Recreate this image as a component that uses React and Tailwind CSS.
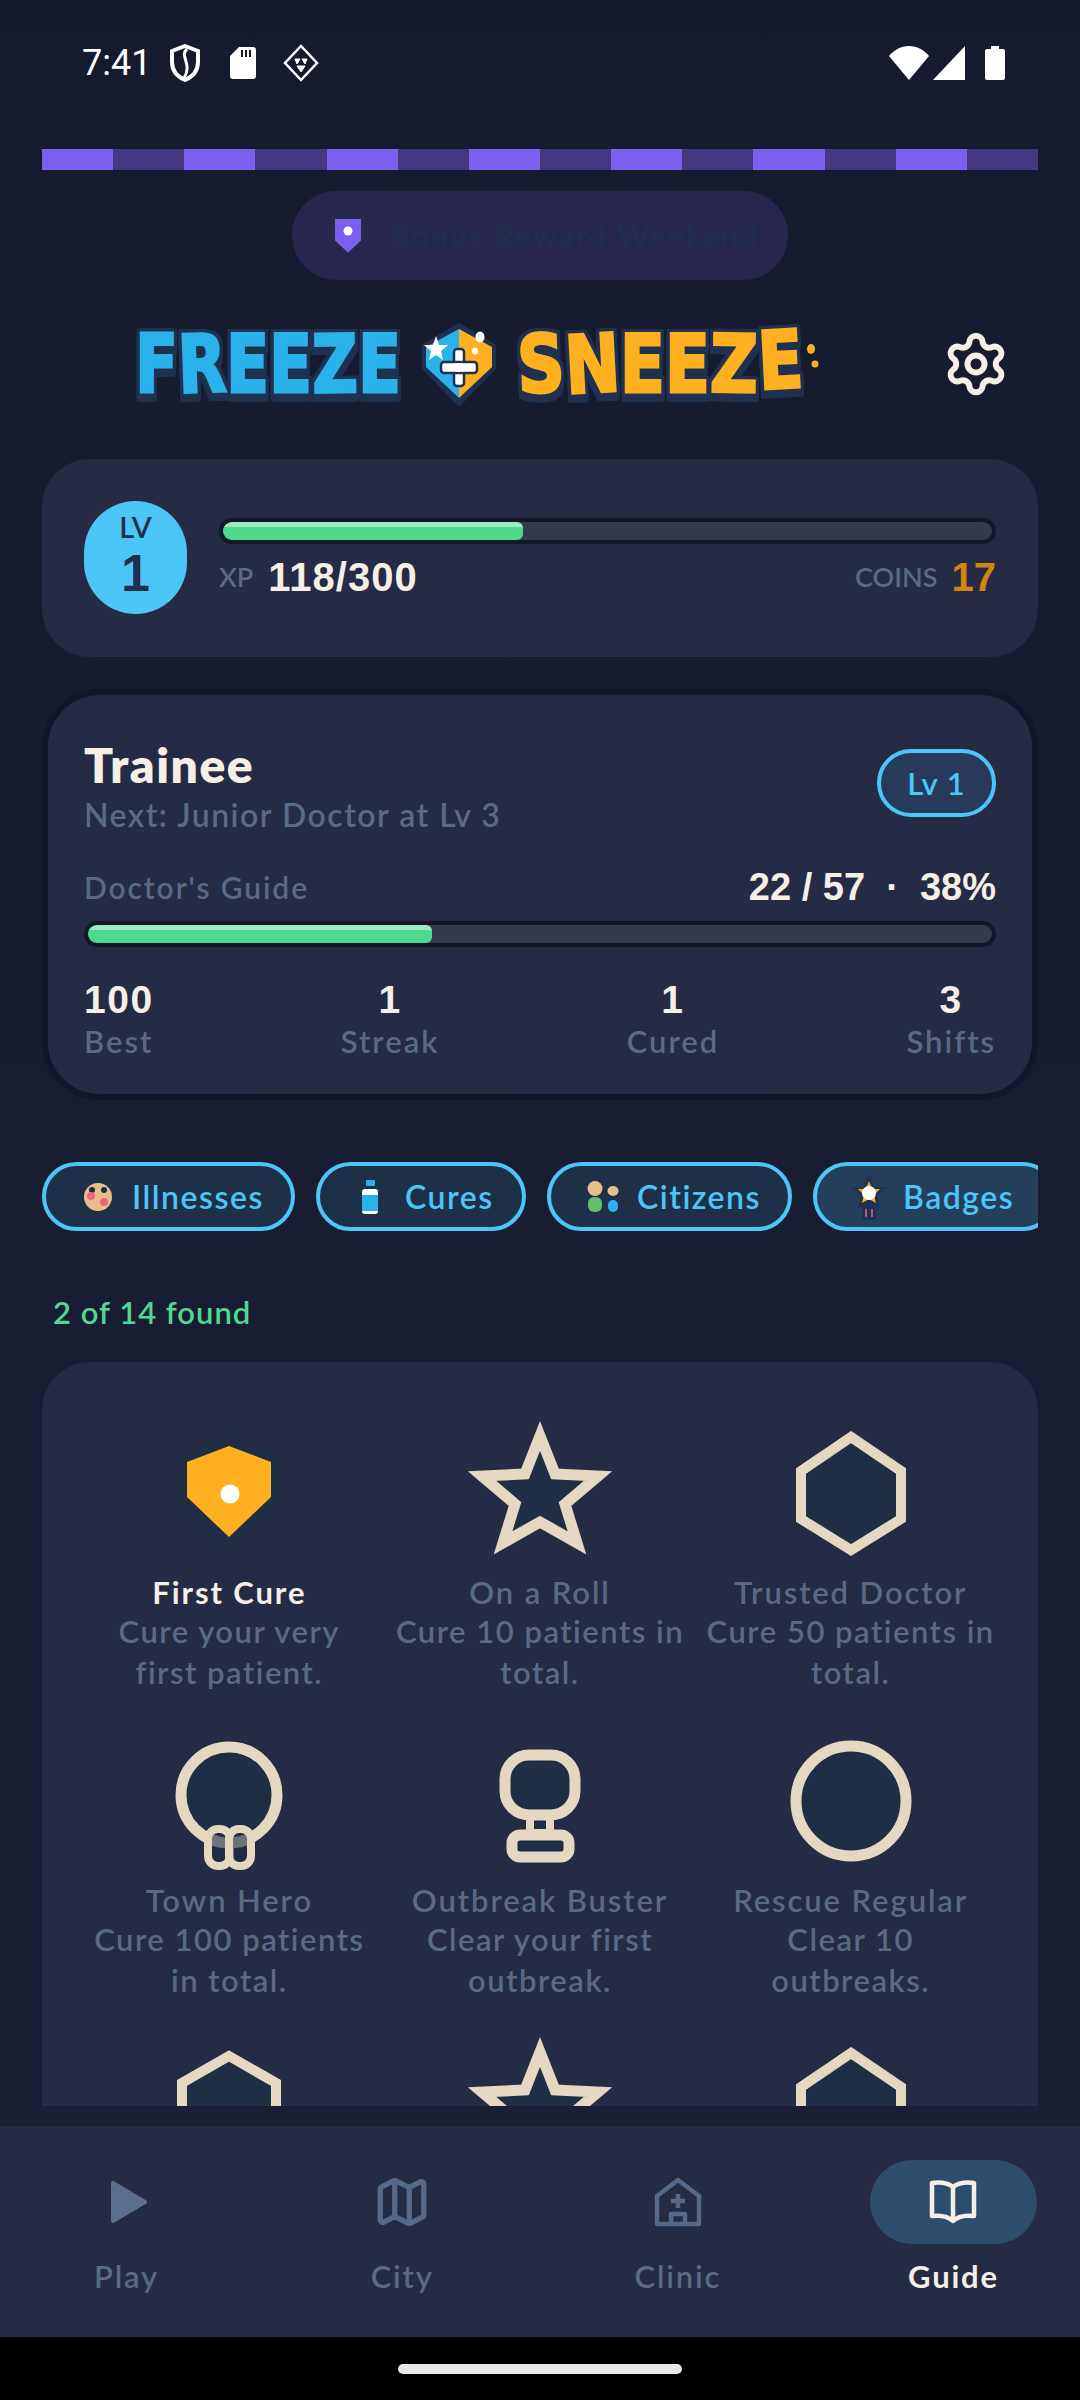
import { Map as MapIcon, Settings } from 'lucide-react';

const FONT = "font-['Lato','Noto_Sans',sans-serif]";
const NUM = "font-['Liberation_Sans',Arial,sans-serif]";

const STRIP = [0, 1, 2, 3, 4, 5, 6, 7, 8, 9, 10, 11, 12, 13];

const FREEZE = [
  ['F', 'w-[43px]'],
  ['R', 'w-[48px] -rotate-2'],
  ['E', 'w-[43px]'],
  ['E', 'w-[43px]'],
  ['Z', 'w-[46px] -rotate-1'],
  ['E', 'w-[43px]'],
];

const SNEEZE = [
  ['S', 'w-[48px] -rotate-2'],
  ['N', 'w-[55px] -rotate-3'],
  ['E', 'w-[45px]'],
  ['E', 'w-[45px]'],
  ['Z', 'w-[48px] rotate-1'],
  ['E', 'w-[45px] -rotate-3 -translate-y-1'],
];

const OUTLINE =
  '[filter:drop-shadow(3px_0_0_#1f3150)_drop-shadow(-3px_0_0_#1f3150)_drop-shadow(0_-3px_0_#1f3150)_drop-shadow(0_3px_0_#1f3150)_drop-shadow(0_5px_0_#1f3150)]';

function LogoWord({ letters, color, scale }) {
  return (
    <div className={`flex ${OUTLINE} ${color}`}>
      {letters.map(([ch, cls], i) => (
        <span
          key={i}
          className={`inline-flex justify-center font-['DejaVu_Sans',sans-serif] text-[80px] leading-[90px] font-bold [-webkit-text-stroke:3px_currentColor] ${scale} ${cls}`}
        >
          {ch}
        </span>
      ))}
    </div>
  );
}

function LogoShield() {
  return (
    <svg width="78" height="86" viewBox="0 0 78 86" className="ml-[19px] mr-[19px] shrink-0">
      <path d="M39 3 L74 24 V46 L39 82 L4 46 V24 Z" fill="#1f3150" stroke="#1f3150" strokeWidth="4" strokeLinejoin="round" />
      <path d="M39 7 V76 L6 45 V25 Z" fill="#2cb2ea" />
      <path d="M39 7 V76 L72 45 V25 Z" fill="#ffb020" />
      <path d="M16 14 L19 23 L28 23 L21 29 L23 38 L16 33 L9 38 L11 29 L4 23 L13 23 Z" fill="#fff" />
      <ellipse cx="60" cy="15" rx="4.5" ry="5.5" fill="#fff" />
      <ellipse cx="55" cy="29" rx="3" ry="3.5" fill="#fff" />
      <rect x="34" y="27" width="10" height="37" rx="3" fill="#fff" stroke="#1f3150" strokeWidth="2.5" />
      <rect x="21" y="40" width="36" height="11" rx="3" fill="#fff" stroke="#1f3150" strokeWidth="2.5" />
      <rect x="35.2" y="41.2" width="7.6" height="8.6" fill="#fff" />
    </svg>
  );
}

function Bar({ fill }) {
  return (
    <div className="h-[26px] w-full rounded-full bg-[#33394f] border-[4px] border-[#131829] overflow-hidden">
      <div className={`h-full ${fill} rounded-r-[6px] bg-[#4fd98f] border-t-[5px] border-[#9ceabf]`} />
    </div>
  );
}

function Stat({ value, label }) {
  return (
    <div className="flex flex-col items-center">
      <div className={`${NUM} font-bold text-[39px] leading-[44px] tracking-[1.5px] text-[#f5efe5]`}>{value}</div>
      <div className="text-[31px] leading-[38px] [font-weight:600] text-[#5a6984] tracking-[2px]">{label}</div>
    </div>
  );
}

function Tab({ children, label, className }) {
  return (
    <div className={`h-[69px] shrink-0 flex items-center rounded-full border-[4px] border-[#4cc5f7] text-[#4cc5f7] text-[32px] [font-weight:600] tracking-[1.5px] ${className}`}>
      {children}
      <span>{label}</span>
    </div>
  );
}

function IllnessIcon() {
  return (
    <svg width="28" height="30" viewBox="0 0 28 30" className="mr-[20px] shrink-0">
      <circle cx="14" cy="15" r="14" fill="#e8bd8e" />
      <circle cx="8" cy="8" r="3" fill="#1f2d45" />
      <circle cx="20" cy="8" r="3" fill="#1f2d45" />
      <circle cx="7" cy="14" r="4" fill="#f0647f" />
      <circle cx="20" cy="20" r="4" fill="#f0647f" />
    </svg>
  );
}

function BottleIcon() {
  return (
    <svg width="18" height="34" viewBox="0 0 18 34" className="mr-[26px] shrink-0">
      <rect x="5" y="0" width="9" height="6" rx="1" fill="#2cb2ea" />
      <rect x="1" y="9" width="16" height="25" rx="3" fill="#fff" />
      <rect x="1" y="15" width="16" height="16" fill="#2cb2ea" />
    </svg>
  );
}

function CitizensIcon() {
  return (
    <svg width="32" height="32" viewBox="0 0 32 32" className="mr-[18px] shrink-0">
      <ellipse cx="8" cy="7.5" rx="7.5" ry="7.5" fill="#e8bd8e" />
      <rect x="1" y="16" width="14" height="15" rx="6" fill="#63bd6e" />
      <ellipse cx="26" cy="10" rx="5.5" ry="5" fill="#e8bd8e" />
      <rect x="21" y="19" width="10" height="12" rx="5" fill="#2cb2ea" />
    </svg>
  );
}

function BadgeIcon() {
  return (
    <svg width="40" height="48" viewBox="0 0 40 48" className="mr-[14px] shrink-0">
      <path d="M13 26 H27 V44 Q27 47 24 47 H16 Q13 47 13 44 Z" fill="#1f3150" />
      <path d="M17 36 V44 M23 36 V44" stroke="#f0647f" strokeWidth="1.5" />
      <path d="M20 0 L25 14 L39 14 L28 23 L32 36 L20 28 L8 36 L12 23 L1 14 L15 14 Z" fill="#1f3150" />
      <path d="M20 8 L23 16 L31 16 L25 22 L27 30 L20 26 L13 30 L15 22 L9 16 L17 16 Z" fill="#ffb020" />
      <circle cx="20" cy="20" r="7" fill="#fff" />
    </svg>
  );
}

const LOCKED = { fill: '#1f2d45', stroke: '#e4d8c3', strokeWidth: 11 };

function ShieldDone() {
  return (
    <>
      <polygon points="75,23 128,46 128,88 75,142 22,88 22,46" fill="#1f2d45" />
      <polygon points="75,34 117,50 117,85 75,125 33,85 33,50" fill="#ffb020" />
      <ellipse cx="76" cy="82" rx="9.5" ry="9.5" fill="#fff" />
    </>
  );
}

function StarLocked() {
  return <polygon points="75,24 90,62 133,64 100,92 112,131 75,110 38,131 50,92 17,64 60,62" {...LOCKED} strokeMiterlimit="10" />;
}

function HexLocked() {
  return <polygon points="75,25 125,59 125,107 75,138 25,107 25,59" {...LOCKED} strokeWidth="10" />;
}

function ShieldLocked() {
  return <polygon points="75,28 122,55 122,110 75,140 28,110 28,55" {...LOCKED} strokeWidth="10" />;
}

function BulbLocked() {
  return (
    <>
      <circle cx="75" cy="75" r="48" {...LOCKED} />
      <rect x="54" y="109" width="22" height="37" rx="10" fill="#1f2d45" fillOpacity="0.6" stroke="#e4d8c3" strokeWidth="8" />
      <rect x="75" y="109" width="22" height="37" rx="10" fill="#1f2d45" fillOpacity="0.6" stroke="#e4d8c3" strokeWidth="8" />
    </>
  );
}

function TrophyLocked() {
  return (
    <>
      <rect x="65" y="95" width="20" height="18" fill="#1f2d45" stroke="#e4d8c3" strokeWidth="8" />
      <rect x="40" y="35" width="70" height="60" rx="24" {...LOCKED} />
      <rect x="47" y="115" width="57" height="22" rx="8" {...LOCKED} />
    </>
  );
}

function RingLocked() {
  return <circle cx="75" cy="81" r="55" {...LOCKED} />;
}

const BADGES = [
  { id: 'first', icon: <ShieldDone />, title: 'First Cure', lines: ['Cure your very', 'first patient.'], done: true },
  { id: 'roll', icon: <StarLocked />, title: 'On a Roll', lines: ['Cure 10 patients in', 'total.'] },
  { id: 'trusted', icon: <HexLocked />, title: 'Trusted Doctor', lines: ['Cure 50 patients in', 'total.'] },
  { id: 'hero', icon: <BulbLocked />, title: 'Town Hero', lines: ['Cure 100 patients', 'in total.'] },
  { id: 'buster', icon: <TrophyLocked />, title: 'Outbreak Buster', lines: ['Clear your first', 'outbreak.'] },
  { id: 'rescue', icon: <RingLocked />, title: 'Rescue Regular', lines: ['Clear 10', 'outbreaks.'] },
  { id: 'row3a', icon: <ShieldLocked /> },
  { id: 'row3b', icon: <StarLocked /> },
  { id: 'row3c', icon: <HexLocked /> },
];

function BadgeCell({ icon, title, lines, done }) {
  return (
    <div className="h-[308px] flex flex-col items-center text-center">
      <svg width="150" height="150" viewBox="0 0 150 150" className="shrink-0">{icon}</svg>
      {title && (
        <>
          <div className={`mt-[11px] text-[31px] leading-[38px] tracking-[1.9px] ${done ? 'text-[#f5efe5] font-bold' : 'text-[#5a6984] [font-weight:600]'}`}>
            {title}
          </div>
          <div className="text-[31px] leading-[41px] [font-weight:600] text-[#5a6984] tracking-[1.5px] whitespace-nowrap">
            {lines.map((l) => (
              <div key={l}>{l}</div>
            ))}
          </div>
        </>
      )}
    </div>
  );
}

function NavItem({ icon, label, active }) {
  return (
    <div className="w-[167px] flex flex-col items-center">
      <div className={`w-[167px] h-[84px] rounded-full flex items-center justify-center ${active ? 'bg-[#2d4d6c]' : ''}`}>{icon}</div>
      <div className={`mt-[12px] text-[31px] leading-[40px] tracking-[1.8px] ${active ? 'font-bold text-[#f5efe5]' : '[font-weight:600] text-[#5a6984]'}`}>
        {label}
      </div>
    </div>
  );
}

export default function App() {
  return (
    <div className={`${FONT} w-[1080px] h-[2400px] flex flex-col bg-linear-to-b from-[#151a2e] to-[#1a1f36] overflow-hidden`}>
      <div className="h-[2126px] shrink-0 flex flex-col">
        {/* status bar */}
        <div className="h-[149px] shrink-0 pl-[82px] pr-[75px] pb-[23px] flex items-center justify-between text-white">
          <div className="flex items-center">
            <span className="font-['Roboto',sans-serif] text-[36px] leading-none">7:41</span>
            <svg width="32" height="38" viewBox="0 0 32 38" className="ml-[18px]" fill="none" stroke="#fff" strokeWidth="4">
              <path d="M16 2 L29 7 V18 C29 27 23 33 16 36 C9 33 3 27 3 18 V7 Z" />
              <path d="M18 5 C10 12 24 20 15 34" strokeWidth="3" />
            </svg>
            <svg width="26" height="32" viewBox="0 0 26 32" className="ml-[29px]" fill="#fff">
              <path d="M9 0 H23 Q26 0 26 3 V29 Q26 32 23 32 H3 Q0 32 0 29 V9 Z" />
              <path d="M12 3 V10 M16 3 V10 M20 3 V10" stroke="#161b2f" strokeWidth="2" />
            </svg>
            <svg width="36" height="38" viewBox="0 0 36 38" className="ml-[27px]" fill="none" stroke="#fff" strokeWidth="2.5">
              <path d="M18 2 L34 19 L18 36 L2 19 Z" />
              <path d="M12 15 H17 L14 20 Z M19 15 H24 L22 20 Z M14 22 H22 L18 28 Z" fill="#fff" strokeWidth="1" />
            </svg>
          </div>
          <div className="flex items-center">
            <svg width="40" height="34" viewBox="0 0 40 34" fill="#fff">
              <path d="M20 34 L0 10 C5 4 12 0 20 0 C28 0 35 4 40 10 Z" />
            </svg>
            <svg width="32" height="34" viewBox="0 0 32 34" fill="#fff" className="ml-[4px]">
              <path d="M32 0 V34 H0 Z" />
            </svg>
            <svg width="20" height="34" viewBox="0 0 20 34" fill="#fff" className="ml-[20px]">
              <path d="M6 0 H14 V3 H18 Q20 3 20 5 V32 Q20 34 18 34 H2 Q0 34 0 32 V5 Q0 3 2 3 H6 Z" />
            </svg>
          </div>
        </div>

        <div className="flex-1 min-h-0 mb-[20px] px-[42px] overflow-hidden flex flex-col">
          {/* event strip */}
          <div className="h-[21px] shrink-0 grid grid-cols-14">
            {STRIP.map((i) => (
              <div key={i} className={i % 2 === 0 ? 'bg-[#7c5fee]' : 'bg-[#453883]'} />
            ))}
          </div>

          <div className="mt-[21px] self-center h-[89px] w-[496px] shrink-0 rounded-[44px] bg-[#28264e] flex items-center pl-[40px]">
            <svg width="32" height="40" viewBox="0 0 32 40" className="shrink-0">
              <path d="M2 2 H30 V25 L16 38 L2 25 Z" fill="#7c5fee" stroke="#1f2d45" strokeWidth="2" />
              <circle cx="16" cy="15" r="4.5" fill="#fff" />
            </svg>
            <span className="ml-[26px] text-[31px] [font-weight:600] text-[#1f2f4d] tracking-[1.75px] whitespace-nowrap">Bonus Reward Weekend</span>
          </div>

          {/* logo */}
          <div className="mt-[40px] h-[90px] shrink-0 relative flex items-center pl-[93px]">
            <LogoWord letters={FREEZE} color="text-[#2cb2ea]" scale="scale-x-[0.78]" />
            <LogoShield />
            <LogoWord letters={SNEEZE} color="text-[#ffb020]" scale="scale-x-[0.82]" />
            <svg width="16" height="36" viewBox="0 0 16 36" className="ml-[3px] -mt-[14px]">
              <ellipse cx="5" cy="9" rx="4" ry="5" fill="#ffb020" />
              <circle cx="9" cy="24" r="3.5" fill="#ffb020" />
            </svg>
            <Settings size={68} strokeWidth={2.1} className="absolute right-[28px] top-[10px] text-[#f5efe5]" />
          </div>

          {/* xp */}
          <div className="mt-[49px] h-[198px] shrink-0 rounded-[48px] bg-[#252a45] flex pl-[42px] pr-[42px] pt-[42px]">
            <div className="w-[103px] h-[113px] shrink-0 rounded-[52px] bg-[#4cc5f7] flex flex-col items-center text-[#1f2f4d]">
              <span className="mt-[9px] text-[29px] leading-[34px] [font-weight:600]">LV</span>
              <span className={`${NUM} mt-[2px] text-[52px] leading-[54px] font-bold`}>1</span>
            </div>
            <div className="ml-[32px] flex-1 pt-[17px]">
              <Bar fill="w-[39%]" />
              <div className="mt-[11px] h-[44px] flex items-center justify-between">
                <div className="flex items-center">
                  <span className="text-[27px] [font-weight:600] text-[#5a6984]">XP</span>
                  <span className={`${NUM} ml-[15px] text-[40px] tracking-[1px] font-bold text-[#f5efe5]`}>118/300</span>
                </div>
                <div className="flex items-center">
                  <span className="text-[27px] [font-weight:600] text-[#5a6984]">COINS</span>
                  <span className={`${NUM} ml-[14px] text-[40px] font-bold text-[#d4860b]`}>17</span>
                </div>
              </div>
            </div>
          </div>

          {/* rank */}
          <div className="mt-[32px] h-[411px] shrink-0 rounded-[58px] bg-[#252a45] border-[6px] border-[#11162a] px-[36px] pt-[44px]">
            <div className="flex items-start justify-between">
              <div>
                <div className="text-[48px] leading-[52px] font-extrabold tracking-[1.5px] text-[#f5efe5]">Trainee</div>
                <div className="mt-[4px] text-[32px] leading-[40px] [font-weight:600] text-[#5a6984] tracking-[1.5px]">Next: Junior Doctor at Lv 3</div>
              </div>
              <div className="mt-[10px] w-[119px] h-[68px] rounded-full bg-[#283a5c] border-[4px] border-[#4cc5f7] flex items-center justify-center text-[31px] [font-weight:600] tracking-[1px] text-[#4cc5f7]">Lv 1</div>
            </div>
            <div className="mt-[30px] flex items-center justify-between h-[44px]">
              <span className="text-[30px] [font-weight:600] text-[#5a6984] tracking-[1.9px]">Doctor's Guide</span>
              <span className={`${NUM} text-[38px] font-bold text-[#f5efe5] whitespace-pre`}>22 / 57  ·  38%</span>
            </div>
            <div className="mt-[12px]">
              <Bar fill="w-[38%]" />
            </div>
            <div className="mt-[31px] flex justify-between">
              <Stat value="100" label="Best" />
              <Stat value="1" label="Streak" />
              <Stat value="1" label="Cured" />
              <Stat value="3" label="Shifts" />
            </div>
          </div>

          {/* tabs */}
          <div className="mt-[62px] h-[69px] shrink-0 flex gap-[21px] overflow-hidden">
            <Tab label="Illnesses" className="w-[253px] pl-[38px] bg-[#1e2f48]"><IllnessIcon /></Tab>
            <Tab label="Cures" className="w-[210px] pl-[41px] bg-[#1e2f48]"><BottleIcon /></Tab>
            <Tab label="Citizens" className="w-[245px] pl-[36px] bg-[#1e2f48]"><CitizensIcon /></Tab>
            <Tab label="Badges" className="w-[244px] pl-[32px] bg-[#243f5c]"><BadgeIcon /></Tab>
          </div>

          <div className="mt-[62px] ml-[11px] h-[38px] shrink-0 flex items-center text-[31px] [font-weight:600] text-[#4fd98f] tracking-[1px]">2 of 14 found</div>

          {/* badge grid */}
          <div className="mt-[31px] flex-1 min-h-0 overflow-hidden rounded-t-[48px] bg-[#252a45] px-[32px] pt-[50px]">
            <div className="grid grid-cols-3">
              {BADGES.map((b) => (
                <BadgeCell key={b.id} {...b} />
              ))}
            </div>
          </div>
        </div>
      </div>

      {/* bottom nav */}
      <div className="h-[211px] shrink-0 bg-[#252a45] px-[43px] pt-[34px] flex justify-between">
        <NavItem
          label="Play"
          icon={
            <svg width="38" height="44" viewBox="0 0 38 44" fill="#5a6f90" stroke="#5a6f90" strokeWidth="4" strokeLinejoin="round" className="ml-[5px]">
              <path d="M3 3 L35 22 L3 41 Z" />
            </svg>
          }
        />
        <NavItem label="City" icon={<MapIcon size={58} strokeWidth={2.2} className="text-[#56698a]" />} />
        <NavItem
          label="Clinic"
          icon={
            <svg width="48" height="50" viewBox="0 0 48 50" fill="none" stroke="#56698a" strokeWidth="4.5" strokeLinejoin="round">
              <path d="M24 3 L45 19 V47 H3 V19 Z" />
              <path d="M24 17 V31 M17 24 H31" />
              <path d="M17 47 V37 H31 V47" />
            </svg>
          }
        />
        <NavItem
          active
          label="Guide"
          icon={
            <svg width="48" height="46" viewBox="0 0 48 46" fill="none" stroke="#f5efe5" strokeWidth="4.5" strokeLinejoin="round">
              <path d="M24 8 C19 4 11 3 3 4 V37 C11 36 19 37 24 42 C29 37 37 36 45 37 V4 C37 3 29 4 24 8 Z" />
              <path d="M24 8 V42" />
            </svg>
          }
        />
      </div>

      {/* gesture bar */}
      <div className="h-[63px] shrink-0 bg-black flex justify-center pt-[27px]">
        <div className="w-[284px] h-[10px] rounded-full bg-[#e8e8e8]" />
      </div>
    </div>
  );
}
